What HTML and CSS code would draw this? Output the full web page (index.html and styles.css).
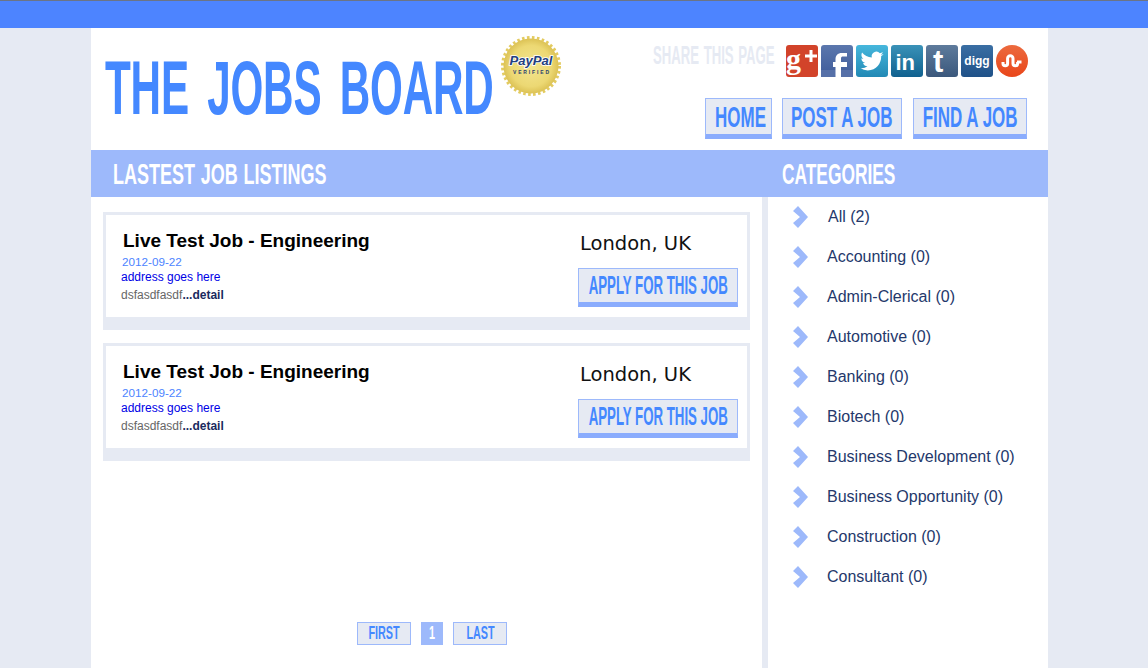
FILE: index.html
```html
<!DOCTYPE html>
<html lang="en">
<head>
<meta charset="utf-8">
<title>The Jobs Board</title>
<link rel="stylesheet" href="styles.css">
</head>
<body>
<div class="topbar"></div>
<div class="page">
  <header class="header">
    <h1 class="logo"><span class="squeeze">THE JOBS BOARD</span></h1>
    <svg class="badge" viewBox="0 0 64 64" width="64" height="64" aria-label="PayPal verified">
      <defs><radialGradient id="gold"><stop offset="0" stop-color="#f3e590"/><stop offset="0.75" stop-color="#ecd873"/><stop offset="1" stop-color="#dcc255"/></radialGradient></defs>
      <circle cx="32" cy="32" r="28.5" fill="none" stroke="#e3cb60" stroke-width="3" stroke-dasharray="2.6 2.4"/>
      <circle cx="32" cy="32" r="27.5" fill="url(#gold)"/>
      <text x="32" y="31" class="pp" text-anchor="middle" textLength="43" lengthAdjust="spacingAndGlyphs">PayPal</text>
      <text x="32" y="40" class="ver" text-anchor="middle" textLength="36" lengthAdjust="spacing">VERIFIED</text>
    </svg>
    <div class="head-right">
      <div class="share">
        <span class="share-label"><span class="squeeze">SHARE THIS PAGE</span></span>
        <div class="icons">
          <svg class="ico" viewBox="0 0 32 32"><rect width="32" height="32" rx="3" fill="#d2432a"/><text x="0" y="24" class="g">g</text><path d="M19 11h12M25 5v12" stroke="#fff" stroke-width="3"/></svg>
          <svg class="ico" viewBox="0 0 32 32"><defs><linearGradient id="fb" x1="0" y1="0" x2="0" y2="1"><stop offset="0" stop-color="#5b77ad"/><stop offset="1" stop-color="#3f5c9a"/></linearGradient></defs><rect width="32" height="32" rx="3" fill="url(#fb)"/><rect y="25" width="32" height="7" fill="#5670a8"/><path d="M20 32V22h6v-5h-6v-3.500c0-1.400.700-2 2-2h4V8h-5c-4.500 0-6.500 2.500-6.500 6.500V17H12v5h2.500v10z" fill="#fff"/></svg>
          <svg class="ico" viewBox="0 0 32 32"><defs><linearGradient id="tw" x1="0" y1="0" x2="0" y2="1"><stop offset="0" stop-color="#46b7dc"/><stop offset="1" stop-color="#2289b5"/></linearGradient></defs><rect width="32" height="32" rx="3" fill="url(#tw)"/><path transform="translate(4.500 4.500) scale(.96)" fill="#fff" d="M23.953 4.570a10 10 0 01-2.825.775 4.958 4.958 0 002.163-2.723c-.951.555-2.005.959-3.127 1.184a4.920 4.920 0 00-8.384 4.482C7.690 8.095 4.067 6.130 1.640 3.162a4.822 4.822 0 00-.666 2.475c0 1.710.870 3.213 2.188 4.096a4.904 4.904 0 01-2.228-.616v.060a4.923 4.923 0 003.946 4.827 4.996 4.996 0 01-2.212.085 4.936 4.936 0 004.604 3.417 9.867 9.867 0 01-6.102 2.105c-.390 0-.779-.023-1.170-.067a13.995 13.995 0 007.557 2.209c9.053 0 13.998-7.496 13.985-14.223.002-.210.002-.420-.015-.630A9.935 9.935 0 0024 4.590z"/></svg>
          <svg class="ico" viewBox="0 0 32 32"><defs><linearGradient id="li" x1="0" y1="0" x2="0" y2="1"><stop offset="0" stop-color="#3a92b8"/><stop offset="1" stop-color="#10618f"/></linearGradient></defs><rect width="32" height="32" rx="3" fill="url(#li)"/><text x="4.500" y="25" class="in">in</text></svg>
          <svg class="ico" viewBox="0 0 32 32"><defs><linearGradient id="tu" x1="0" y1="0" x2="0" y2="1"><stop offset="0" stop-color="#5e7b9c"/><stop offset="1" stop-color="#3b587c"/></linearGradient></defs><rect width="32" height="32" rx="3" fill="url(#tu)"/><text x="7" y="27" class="tb">t</text></svg>
          <svg class="ico" viewBox="0 0 32 32"><defs><linearGradient id="dg" x1="0" y1="0" x2="0" y2="1"><stop offset="0" stop-color="#3a6ea3"/><stop offset="1" stop-color="#1f5188"/></linearGradient></defs><rect width="32" height="32" rx="3" fill="url(#dg)"/><text x="16" y="20" class="dg" text-anchor="middle">digg</text></svg>
          <svg class="ico" viewBox="0 0 32 32"><defs><linearGradient id="su" x1="0" y1="0" x2="0" y2="1"><stop offset="0" stop-color="#ec6a3e"/><stop offset="1" stop-color="#e9461a"/></linearGradient></defs><circle cx="16" cy="16" r="16" fill="url(#su)"/><path d="M7 17v1.500a2.300 2.300 0 0 0 4.600 0v-5a2.700 2.700 0 0 1 5.400 0v5a2.300 2.300 0 0 0 4.600 0v-1.500" fill="none" stroke="#fff" stroke-width="3"/><path d="M21 17h4.500" stroke="#fff" stroke-width="3"/></svg>
        </div>
      </div>
      <nav class="nav">
        <a class="btn nav-home"><span class="squeeze">HOME</span></a>
        <a class="btn nav-post"><span class="squeeze">POST A JOB</span></a>
        <a class="btn nav-find"><span class="squeeze">FIND A JOB</span></a>
      </nav>
    </div>
  </header>

  <div class="bands">
    <h2 class="band band-main"><span class="squeeze">LASTEST JOB LISTINGS</span></h2>
    <h2 class="band band-side"><span class="squeeze">CATEGORIES</span></h2>
  </div>

  <div class="columns">
    <main class="listing">
      <div class="jobs">
        <article class="job">
          <div class="job-inner">
            <div class="job-text">
              <h3 class="job-title">Live Test Job - Engineering</h3>
              <div class="job-date">2012-09-22</div>
              <div class="job-addr">address goes here</div>
              <div class="job-desc">dsfasdfasdf<b>...detail</b></div>
            </div>
            <div class="job-side">
              <div class="job-loc">London, UK</div>
              <a class="btn apply"><span class="squeeze">APPLY FOR THIS JOB</span></a>
            </div>
          </div>
        </article>
        <article class="job">
          <div class="job-inner">
            <div class="job-text">
              <h3 class="job-title">Live Test Job - Engineering</h3>
              <div class="job-date">2012-09-22</div>
              <div class="job-addr">address goes here</div>
              <div class="job-desc">dsfasdfasdf<b>...detail</b></div>
            </div>
            <div class="job-side">
              <div class="job-loc">London, UK</div>
              <a class="btn apply"><span class="squeeze">APPLY FOR THIS JOB</span></a>
            </div>
          </div>
        </article>
      </div>
      <div class="pager">
        <a class="pg pg-first"><span class="squeeze">FIRST</span></a>
        <a class="pg pg-cur"><span class="squeeze">1</span></a>
        <a class="pg pg-last"><span class="squeeze">LAST</span></a>
      </div>
    </main>
    <aside class="cats">
      <ul class="cat-list">
        <li class="cat"><svg class="chev" viewBox="0 0 15 22"><polygon points="5,0 15,11 5,22 0,17 7,11 0,5"/></svg><span class="cat-all">All (2)</span></li>
        <li class="cat"><svg class="chev" viewBox="0 0 15 22"><polygon points="5,0 15,11 5,22 0,17 7,11 0,5"/></svg><span>Accounting (0)</span></li>
        <li class="cat"><svg class="chev" viewBox="0 0 15 22"><polygon points="5,0 15,11 5,22 0,17 7,11 0,5"/></svg><span>Admin-Clerical (0)</span></li>
        <li class="cat"><svg class="chev" viewBox="0 0 15 22"><polygon points="5,0 15,11 5,22 0,17 7,11 0,5"/></svg><span>Automotive (0)</span></li>
        <li class="cat"><svg class="chev" viewBox="0 0 15 22"><polygon points="5,0 15,11 5,22 0,17 7,11 0,5"/></svg><span>Banking (0)</span></li>
        <li class="cat"><svg class="chev" viewBox="0 0 15 22"><polygon points="5,0 15,11 5,22 0,17 7,11 0,5"/></svg><span>Biotech (0)</span></li>
        <li class="cat"><svg class="chev" viewBox="0 0 15 22"><polygon points="5,0 15,11 5,22 0,17 7,11 0,5"/></svg><span>Business Development (0)</span></li>
        <li class="cat"><svg class="chev" viewBox="0 0 15 22"><polygon points="5,0 15,11 5,22 0,17 7,11 0,5"/></svg><span>Business Opportunity (0)</span></li>
        <li class="cat"><svg class="chev" viewBox="0 0 15 22"><polygon points="5,0 15,11 5,22 0,17 7,11 0,5"/></svg><span>Construction (0)</span></li>
        <li class="cat"><svg class="chev" viewBox="0 0 15 22"><polygon points="5,0 15,11 5,22 0,17 7,11 0,5"/></svg><span>Consultant (0)</span></li>
      </ul>
    </aside>
  </div>
</div>
</body>
</html>
```

FILE: styles.css
```css
* { box-sizing: border-box; }
html, body { margin: 0; padding: 0; height: 100%; overflow: hidden; }
body { background: #e6eaf3; font-family: "Liberation Sans", Arial, sans-serif; }
h1, h2, h3, ul { margin: 0; padding: 0; font-weight: normal; }
ul { list-style: none; }

.topbar { height: 28px; background: #4d84ff; border-top: 1px solid #6b7486; }
.page { width: 957px; height: 640px; margin-left: 91px; background: #fff; display: flex; flex-direction: column; position: relative; }

/* condensed display lettering, squeezed horizontally */
.squeeze { display: inline-block; white-space: nowrap; font-family: "Liberation Sans", sans-serif; font-weight: bold; transform-origin: left center; }

.header { height: 122px; display: flex; justify-content: space-between; }
.logo { width: 400px; padding: 18px 0 0 14px; font-size: 76px; line-height: 84px; color: #4488ff; overflow: visible; }
.logo .squeeze { transform: scaleX(.556); word-spacing: .16em; letter-spacing: -.005em; }
.badge { position: absolute; left: 408px; top: 6px; }
.pp { font: italic bold 12.500px "Liberation Sans", sans-serif; fill: #23407f; stroke: #fff; stroke-width: 1.600px; paint-order: stroke; }
.ver { font: bold 5px "Liberation Sans", sans-serif; fill: #2a3f6f; }

.head-right { width: 400px; display: flex; flex-direction: column; align-items: flex-end; padding-top: 17px; padding-right: 20px; }
.share { display: flex; align-items: flex-start; width: 375px; }
.share-label { width: 133px; font-size: 25px; line-height: 20px; color: #e6eaf3; overflow: visible; }
.share-label .squeeze { transform: scaleX(.525); word-spacing: .08em; }
.icons { display: flex; gap: 3px; margin-right: -1px; }
.ico { width: 32px; height: 32px; display: block; overflow: visible; }
.g { font: bold 30px "Liberation Serif", serif; fill: #fff; }
.in { font: bold 22px "Liberation Sans", sans-serif; fill: #fff; }
.tb { font: bold 31px "Liberation Sans", sans-serif; fill: #fff; }
.dg { font: bold 12px "Liberation Sans", sans-serif; fill: #fff; }

.btn { display: flex; align-items: center; justify-content: center; background: #e6eaf3; border: 1px solid #9db9fb; border-bottom: 5px solid #8aacfd; color: #4488ff; overflow: visible; }
.btn .squeeze { transform-origin: center center; }
.nav { display: flex; margin-top: 21px; margin-right: 1px; }
.nav .btn { height: 41px; font-size: 29px; padding-top: 2px; }
.nav .squeeze { transform: scaleX(.585); }
.nav .nav-home { width: 67px; margin-right: 10px; padding-left: 4px; }
.nav-post { width: 120px; margin-right: 11px; }
.nav-find { width: 114px; }

.bands { display: flex; height: 47px; background: #9db9fb; color: #fff; flex: none; }
.band { font-size: 30px; line-height: 47px; }
.band-main .squeeze { transform: scaleX(.6); word-spacing: .04em; }
.band-side .squeeze { transform: scaleX(.578); }
.band-main { width: 691px; padding-left: 22px; }
.band-side { flex: 1; }

.columns { flex: 1; display: flex; min-height: 0; }
.listing { width: 671px; flex: none; padding: 15px 12px 0; display: flex; flex-direction: column; position: relative; }
.jobs { display: flex; flex-direction: column; gap: 13px; }
.job { height: 118px; background: #e6eaf3; padding: 3px 3px 13px; }
.job-inner { height: 102px; background: #fff; display: flex; justify-content: space-between; padding: 15px 9px 0 15px; }
.job-title { font-size: 19px; font-weight: bold; color: #000; line-height: 22px; margin-left: 2px; }
.job-date { font-size: 11.700px; line-height: 14px; color: #4d84ff; margin-top: 3px; margin-left: 1px; }
.job-addr { font-size: 12px; line-height: 14px; color: #0000e6; margin-top: 1px; }
.job-desc { font-size: 12px; line-height: 14px; color: #666; margin-top: 4px; }
.job-desc b { color: #1a2a5e; }
.job-side { width: 160px; display: flex; flex-direction: column; }
.job-loc { font: 19.500px/22px "DejaVu Sans", sans-serif; color: #111; margin-left: 2px; margin-top: 3px; }
.apply { width: 160px; height: 39px; font-size: 25px; margin-top: 13px; }
.apply .squeeze { transform: scaleX(.53); }

.pager { position: absolute; left: 266px; top: 425px; display: flex; gap: 10px; }
.pg { height: 23px; display: flex; align-items: center; justify-content: center; font-size: 18px; color: #4488ff; background: #e6eaf3; border: 1px solid #9db9fb; }
.pg .squeeze { transform: scaleX(.6); transform-origin: center center; }
.pg-first, .pg-last { width: 54px; }
.pg-cur { width: 22px; background: #9db9fb; color: #fff; }

.cats { flex: 1; border-left: 6px solid #e6eaf3; padding: 0 0 0 25px; }
.cat { height: 40px; display: flex; align-items: center; font-size: 16px; color: #24386b; }
.chev { width: 15px; height: 22px; fill: #9db9fb; margin-right: 19px; flex: none; }
.cat-all { margin-left: 1px; }
```
